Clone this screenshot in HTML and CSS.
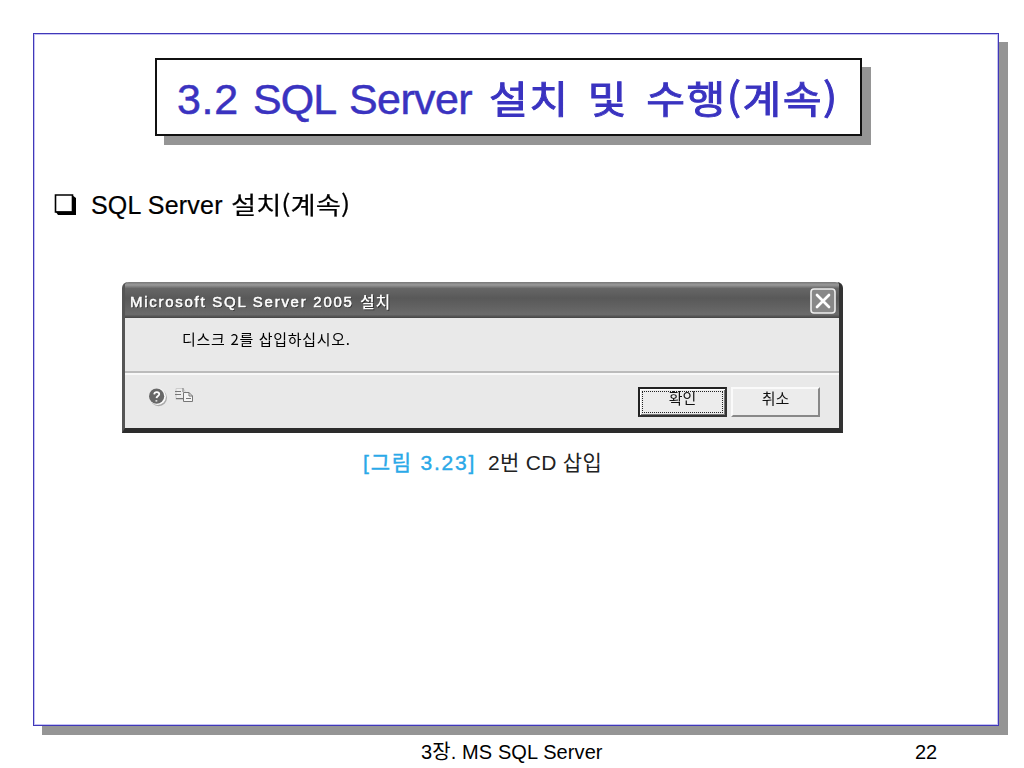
FILE: index.html
```html
<!DOCTYPE html>
<html lang="ko">
<head>
<meta charset="utf-8">
<title>3.2 SQL Server 설치 및 수행(계속)</title>
<link rel="stylesheet" href="styles.css">
</head>
<body>
<main class="slide">
  <h1 class="title"><span class="title-number">3.2</span><span class="title-sql">SQL</span><span class="title-server">Server</span><span class="title-ko">설치 및 수행(계속)</span></h1>
  <h2 class="topic">
    <svg class="bullet" width="22" height="22" viewBox="0 0 22 22"><path d="M1.5 1H18.5V18H1.5Z" fill="#fff" stroke="#000" stroke-width="1.6"/><path d="M1.5 17.5H18V1L22 4V21H4Z"/></svg>
    <span class="topic-latin">SQL Server</span><span class="topic-ko">설치(계속)</span>
  </h2>
  <figure class="figure">
    <section class="dialog">
      <header class="bar">
        <span class="bar-latin">Microsoft SQL Server 2005</span><span class="bar-ko">설치</span>
        <svg class="close" width="26" height="26" viewBox="0 0 26 26"><rect x="1" y="1" width="24" height="24" rx="3" fill="#888" stroke="#eee" stroke-width="1.6"/><path d="M7 7L19 19M19 7L7 19" stroke="#fff" stroke-width="2.7" stroke-linecap="round"/></svg>
      </header>
      <div class="message">디스크 2를 삽입하십시오.</div>
      <footer class="actions">
        <svg class="help" width="20" height="20" viewBox="0 0 20 20"><circle cx="10.6" cy="10.8" r="8.4" fill="#aaa"/><circle cx="9.6" cy="9.6" r="8.4" fill="#fafafa"/><circle cx="8.6" cy="9.2" r="7.6" fill="#686868"/><path d="M6.2 7.3C6.5 4.3 11.6 4.5 11.2 7.4C11 9 8.7 9 8.5 11.1M8.4 13.2V14.6" fill="none" stroke="#fff" stroke-width="1.8"/></svg>
        <svg class="copy" width="20" height="18" viewBox="0 0 20 18"><path d="M2 1.5H9L11 4V12.5H2Z" fill="#eee" stroke="#ccc"/><path d="M1 4.5H7M1 7.5H7M2 11.5H9M9 1V5" stroke="#777"/><path d="M9.5 5.5H15L18.5 9V14.5H9.5Z" fill="#f5f5f5" stroke="#777"/><path d="M15 5.5V9H18.5M12 11.5H17" fill="none" stroke="#777"/></svg>
        <button class="btn btn-default"><span>확인</span></button>
        <button class="btn"><span>취소</span></button>
      </footer>
    </section>
    <figcaption class="caption"><span class="caption-no">[그림 3.23]</span><span class="caption-text">2번 CD 삽입</span></figcaption>
  </figure>
</main>
<footer class="foot"><span class="chapter">3장. MS SQL Server</span><span class="page">22</span></footer>
</body>
</html>
```
FILE: styles.css
```css
* { box-sizing: border-box; }
body {
  margin: 0; width: 1024px; height: 768px; overflow: hidden;
  padding: 33px 0 0 33px; background: #fff; color: #000;
  font-family: "Liberation Sans", "Noto Sans CJK KR", sans-serif;
}
h1, h2, figure { margin: 0; font-weight: 400; }
.slide {
  width: 966px; height: 693px; padding: 24px 0 0 20px; background: #fff;
  border: 1px solid #4038b8;
  box-shadow: inset 0 0 0 1px #c4c1f3, 9px 9px 0 #959595;
}
.title {
  display: flex; align-items: center;
  width: 707px; height: 78px; margin-left: 101px; padding-left: 20px;
  border: 2px solid #111; background: #fff; box-shadow: 9px 9px 0 #959595;
  color: #3a33c0; white-space: nowrap; line-height: 74px;
  font-size: 43px; -webkit-text-stroke: .5px #3a33c0;
}
.title-number, .title-sql, .title-server { padding-top: 3px; }
.title-number { width: 76px; letter-spacing: .7px; }
.title-sql { width: 96px; letter-spacing: -1px; }
.title-server { width: 140px; letter-spacing: -.6px; }
.title-ko {
  font-family: "Noto Sans CJK KR", sans-serif; font-size: 38px; font-weight: 400;
  -webkit-text-stroke: .9px #3a33c0;
  letter-spacing: 1.3px; word-spacing: 4.5px; transform: scaleX(1.11); transform-origin: left;
}
.topic {
  display: flex; align-items: center; height: 40px; margin-top: 49px;
  font-size: 25px; line-height: 40px; white-space: nowrap;
  -webkit-text-stroke: .2px #000;
}
.bullet { margin-right: 15px; }
.topic-latin { width: 140px; letter-spacing: .2px; }
.topic-ko {
  font-family: "Noto Sans CJK KR", sans-serif; font-size: 24px; line-height: 38px; padding-bottom: 2px;
  transform: scaleX(1.14); transform-origin: left;
}
.figure { width: 721px; margin: 57px 0 0 68px; }
.dialog {
  height: 151px; border: solid #555; border-width: 0 4px 5px 3px;
  border-right-color: #333; border-bottom-color: #2c2c2c;
  border-radius: 6px 6px 0 0; background: #e9e9e9; filter: blur(.3px);
}
.bar {
  display: flex; align-items: center; height: 36px; padding: 2px 3px 0 5px;
  border-radius: 4px 4px 0 0; color: #fff; white-space: nowrap;
  background: linear-gradient(#777 0, #999 8%, #666 18%, #595959 45%, #626262 70%, #6b6b6b 90%, #444 100%);
  text-shadow: 1px 1px 0 #333;
}
.bar-latin { width: 230px; font-size: 15px; -webkit-text-stroke: .5px #fff; letter-spacing: 1.73px; }
.bar-ko { font-family: "Noto Sans CJK KR", sans-serif; font-size: 16px; font-weight: 500; letter-spacing: .8px; }
.close { margin-left: auto; }
.message {
  height: 55px; padding: 10px 0 0 57px; border-bottom: 2px solid #bbb;
  font: 15px/22px "Noto Sans CJK KR", sans-serif; letter-spacing: .7px; white-space: nowrap;
}
.actions { display: flex; align-items: flex-start; height: 55px; padding: 12px 19px 0 23px; border-top: 2px solid #f8f8f8; }
.help { margin-right: 6px; }
.copy { margin-right: auto; }
.btn {
  display: flex; flex-direction: column; align-items: stretch;
  width: 89px; height: 30px; padding: 2px; background: #ececec; color: #111;
  border: 2px solid; border-color: #fafafa #888 #888 #fafafa;
  font: 15px/14px "Noto Sans CJK KR", sans-serif;
}
.btn span { display: block; height: 22px; }
.btn-default { margin-right: 4px; border-color: #222 #333 #333 #222; box-shadow: inset 1px 1px #fff, inset -1px -1px #777; }
.btn-default span { border: 1px dotted #222; line-height: 12px; }
.caption { display: flex; margin: 15px 0 0 241px; font-size: 21px; line-height: 30px; white-space: nowrap; }
.caption-no { width: 125px; color: #2aa9e8; letter-spacing: 1.8px; -webkit-text-stroke: .4px #2aa9e8; }
.caption-text { color: #222; letter-spacing: .3px; }
.foot { display: flex; margin-top: 12px; font-size: 20px; line-height: 28px; white-space: nowrap; }
.chapter { width: 494px; margin-left: 388px; letter-spacing: .1px; }
```
